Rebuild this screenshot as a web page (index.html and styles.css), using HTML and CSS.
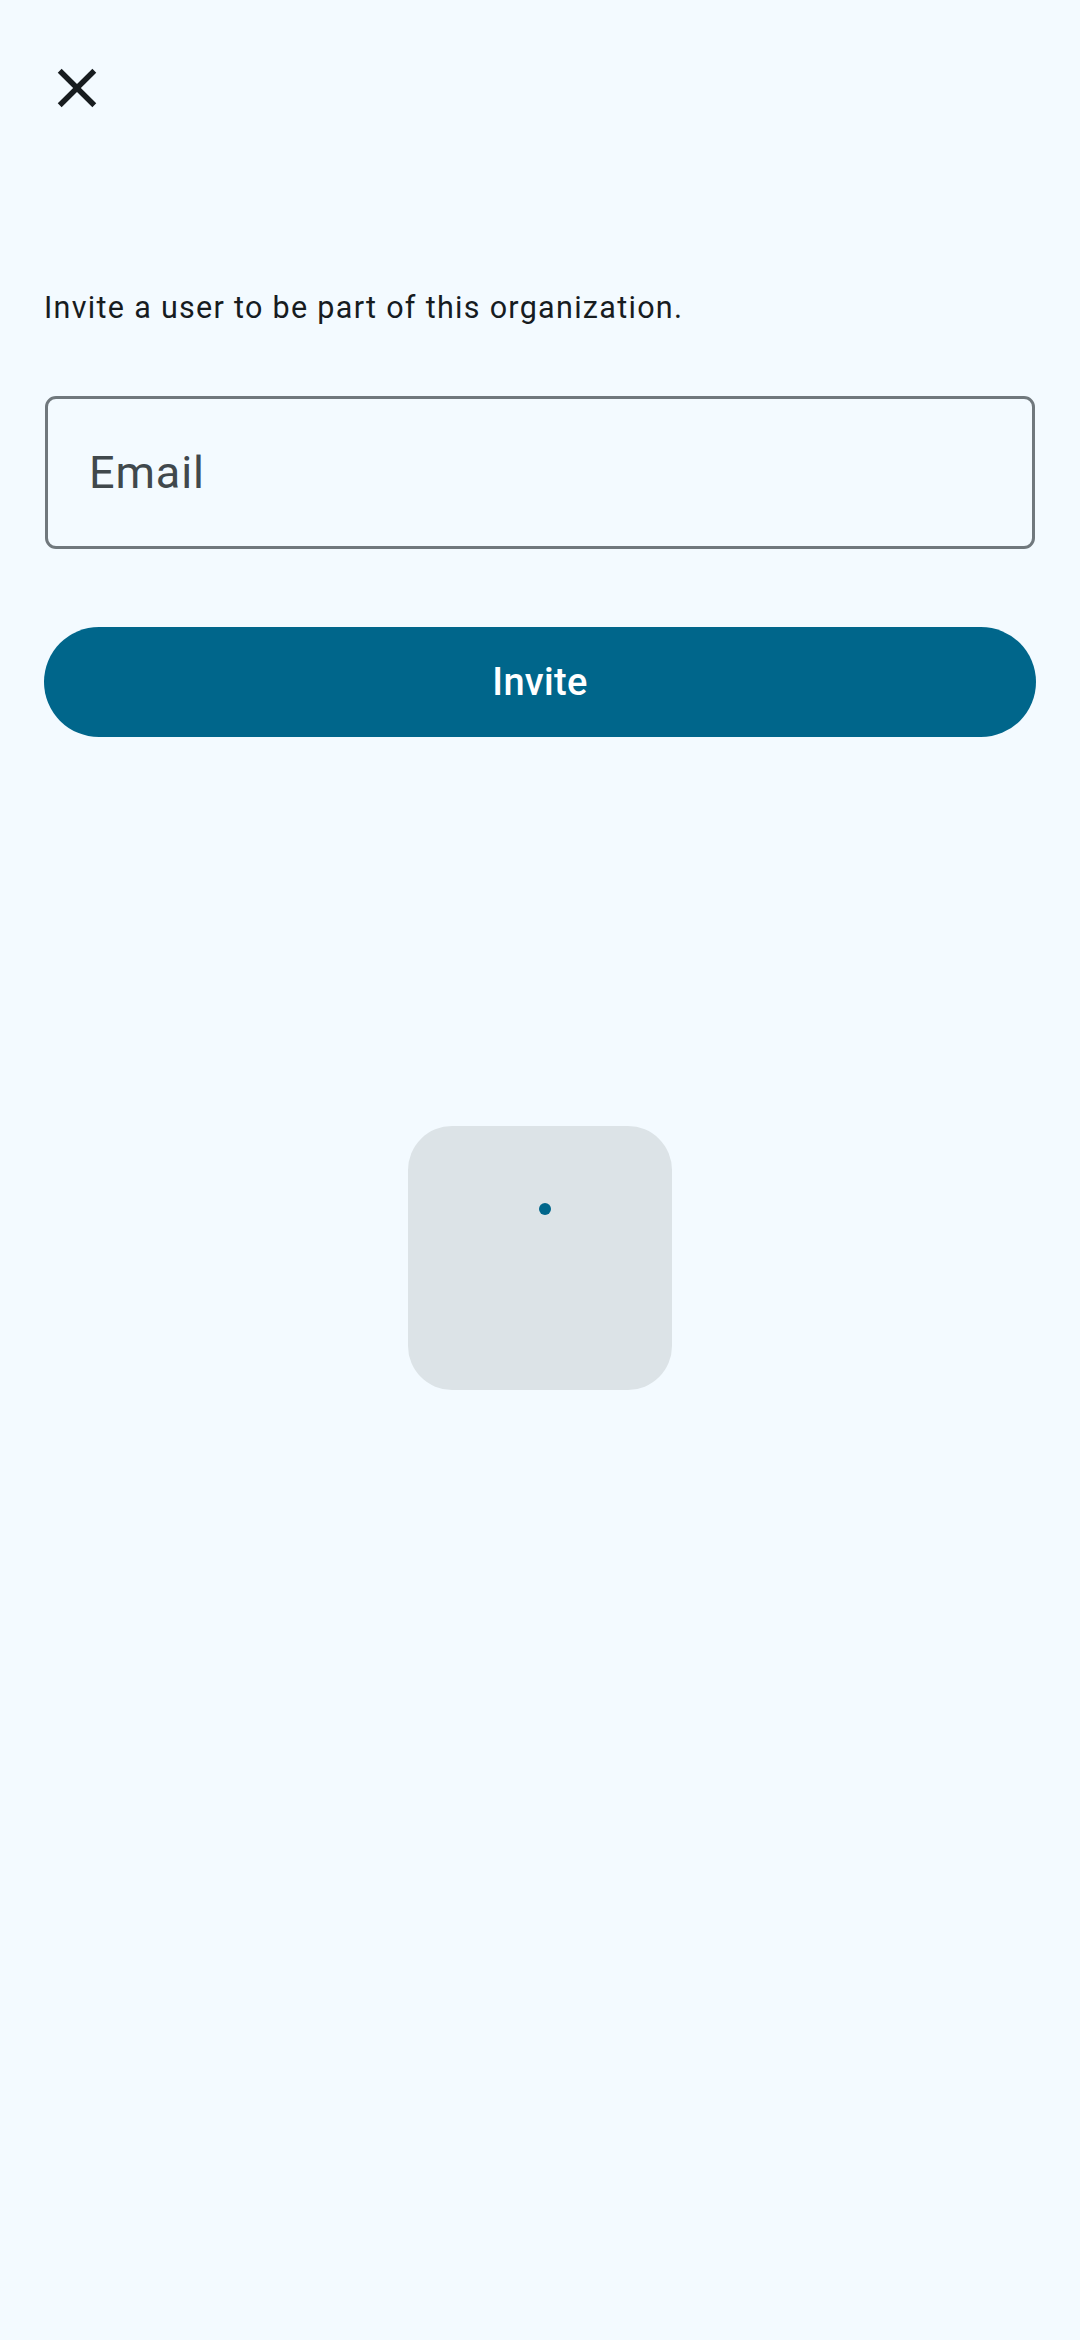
FILE: index.html
```html
<!DOCTYPE html>
<html lang="en">
<head>
<meta charset="utf-8">
<title>Invite user</title>
<link rel="stylesheet" href="styles.css">
</head>
<body>
<div class="screen">
  <header class="topbar">
    <button class="icon-btn" aria-label="Close">
      <svg viewBox="0 0 24 24" width="66" height="66"><path fill="#171c1f" d="M19 6.41L17.59 5 12 10.59 6.41 5 5 6.41 10.59 12 5 17.59 6.41 19 12 13.41 17.59 19 19 17.59 13.41 12z"/></svg>
    </button>
  </header>
  <main class="content">
    <p class="intro">Invite a user to be part of this organization.</p>
    <div class="field">
      <span class="placeholder">Email</span>
    </div>
    <button class="primary">Invite</button>
    <div class="loader-wrap">
      <div class="loader">
        <span class="dot"></span>
      </div>
    </div>
  </main>
</div>
</body>
</html>
```

FILE: styles.css
```css
html, body {
  margin: 0;
  padding: 0;
  background: #f3faff;
}
body {
  font-family: Roboto, "Noto Sans", "Liberation Sans", sans-serif;
  width: 1080px;
  min-height: 2340px;
}
.screen {
  display: flex;
  flex-direction: column;
}
.topbar {
  height: 176px;
  display: flex;
  align-items: center;
  padding-left: 44px;
}
.icon-btn {
  width: 66px;
  height: 66px;
  padding: 0;
  border: 0;
  background: transparent;
  display: flex;
}
.content {
  display: flex;
  flex-direction: column;
  padding: 0 44px;
}
.intro {
  margin: 112px 0 0;
  font-size: 30.5px;
  line-height: 40px;
  letter-spacing: 1.3px;
  color: #171c1f;
}
.field {
  margin: 68px 1px 0;
  height: 153px;
  box-sizing: border-box;
  border: 3px solid #70787d;
  border-radius: 11px;
  display: flex;
  align-items: center;
  padding-left: 41px;
}
.placeholder {
  font-size: 45px;
  letter-spacing: 0.9px;
  color: #40484c;
  line-height: 1;
}
.primary {
  margin-top: 78px;
  height: 110px;
  border: 0;
  border-radius: 55px;
  background: #00668b;
  color: #ffffff;
  font-family: Roboto, "Noto Sans", sans-serif;
  font-size: 38px;
  font-weight: 500;
  letter-spacing: 0.3px;
}
.loader-wrap {
  display: flex;
  justify-content: center;
  margin-top: 389px;
}
.loader {
  width: 264px;
  height: 264px;
  box-sizing: border-box;
  border-radius: 44px;
  background: #dce3e7;
  padding: 77px 0 0 131px;
}
.dot {
  display: block;
  width: 12px;
  height: 12px;
  border-radius: 50%;
  background: #00668b;
}
```
